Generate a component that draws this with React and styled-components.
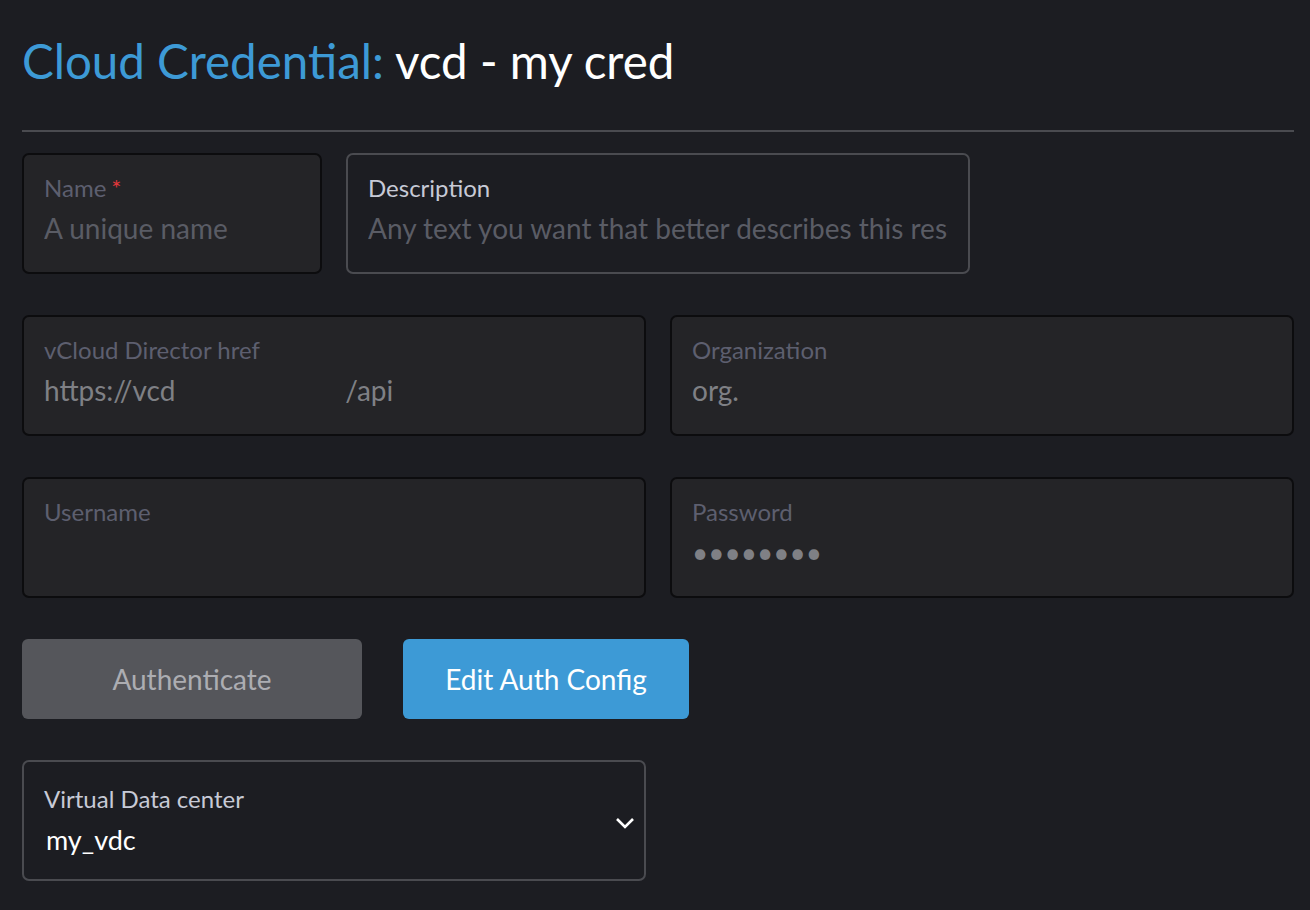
import React from "react";
import styled, { createGlobalStyle } from "styled-components";

const GlobalStyle = createGlobalStyle`
  html, body {
    margin: 0;
    padding: 0;
    background: #1c1d22;
    font-family: Lato, "Open Sans", sans-serif;
  }
`;

const Page = styled.div`
  width: 1310px;
  padding: 19px 16px 30px 22px;
  min-height: 910px;
  box-sizing: border-box;
  background: #1c1d22;
`;

const Title = styled.h1`
  margin: 0;
  font-size: 47.5px;
  font-weight: 400;
  line-height: 84px;
  color: #ffffff;
  white-space: nowrap;

  span {
    color: #3d9ad6;
  }
`;

const Divider = styled.hr`
  margin: 27px 0 21px;
  border: none;
  height: 2px;
  background: #4a4b50;
`;

const Form = styled.div`
  display: flex;
  flex-direction: column;
  gap: 41px;
`;

const Row = styled.div`
  display: grid;
  grid-template-columns: ${props => props.$cols || "624px 624px"};
  gap: 24px;
`;

const Field = styled.label`
  display: flex;
  flex-direction: column;
  height: 121px;
  box-sizing: border-box;
  padding: ${props => (props.$select ? "23px 58px 0 20px" : "19px 20px 0 20px")};
  border-radius: 7px;
  border: 2px solid ${props => (props.$disabled ? "#0c0c0e" : "#4a4b50")};
  background: ${props => (props.$disabled ? "#242427" : "transparent")};
  position: relative;
  overflow: hidden;
`;

const Label = styled.div`
  font-size: 24px;
  line-height: 28px;
  color: ${props => (props.$disabled ? "#5d5f6f" : "#c7cad6")};
  white-space: nowrap;
`;

const Required = styled.span`
  color: #e0373a;
  margin-left: 5px;
`;

const Value = styled.div`
  margin-top: ${props => (props.$select ? "10px" : "9px")};
  font-size: ${props => (props.$select ? "27px" : "28px")};
  line-height: 34px;
  min-height: 34px;
  white-space: nowrap;
  overflow: hidden;
  color: ${props =>
    props.$tone === "placeholder" ? "#5a5c65" : props.$tone === "bright" ? "#ffffff" : "#7f8085"};
  padding-left: ${props => (props.$select ? "2px" : "0")};
`;

const Gap = styled.span`
  display: inline-block;
  width: 170px;
`;

const Chevron = styled.svg`
  position: absolute;
  right: 9px;
  top: 55px;
`;

const Buttons = styled.div`
  display: flex;
  gap: 41px;
`;

const Button = styled.button`
  height: 80px;
  width: ${props => props.$width};
  border: none;
  border-radius: 6px;
  font-family: Lato, "Open Sans", sans-serif;
  font-size: 28px;
  cursor: pointer;
  background: ${props => (props.$primary ? "#3d9ad6" : "#55565b")};
  color: ${props => (props.$primary ? "#ffffff" : "#acadb2")};
`;

export default function App() {
  return (
    <>
      <GlobalStyle />
      <Page>
        <Title>
          <span>Cloud Credential:</span> vcd - my cred
        </Title>
        <Divider />
        <Form>
          <Row $cols="300px 624px">
            <Field $disabled>
              <Label $disabled>
                Name<Required>*</Required>
              </Label>
              <Value $tone="placeholder">A unique name</Value>
            </Field>
            <Field>
              <Label>Description</Label>
              <Value $tone="placeholder">Any text you want that better describes this resource</Value>
            </Field>
          </Row>
          <Row>
            <Field $disabled>
              <Label $disabled>vCloud Director href</Label>
              <Value>
                https://vcd<Gap />/api
              </Value>
            </Field>
            <Field $disabled>
              <Label $disabled>Organization</Label>
              <Value>org.</Value>
            </Field>
          </Row>
          <Row>
            <Field $disabled>
              <Label $disabled>Username</Label>
              <Value />
            </Field>
            <Field $disabled>
              <Label $disabled>Password</Label>
              <Value>••••••••</Value>
            </Field>
          </Row>
          <Buttons>
            <Button $width="340px">Authenticate</Button>
            <Button $primary $width="286px">Edit Auth Config</Button>
          </Buttons>
          <Row>
            <Field $select>
              <Label>Virtual Data center</Label>
              <Value $select $tone="bright">my_vdc</Value>
              <Chevron width="20" height="12" viewBox="0 0 20 12">
                <path d="M2 2l8 8 8-8" fill="none" stroke="#ffffff" strokeWidth="2.6" />
              </Chevron>
            </Field>
          </Row>
        </Form>
      </Page>
    </>
  );
}
